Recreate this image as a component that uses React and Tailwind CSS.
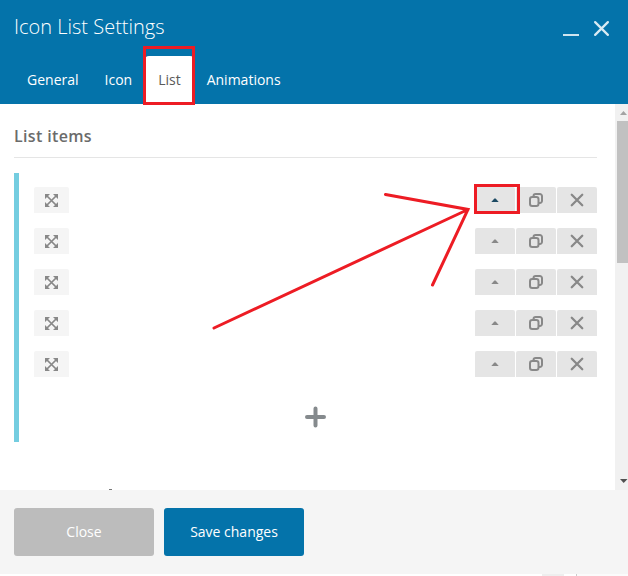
const tabs = ['General', 'Icon', 'List', 'Animations'];
const rows = [0, 1, 2, 3, 4];

function MoveIcon() {
  return (
    <svg width="13" height="13" viewBox="0 0 13 13" fill="#888888">
      <path d="M0 0h5L0 5zM8 0h5v5zM0 8v5h5zM13 8v5H8z" />
      <path d="M1.5 1.5l10 10M11.5 1.5l-10 10" stroke="#888888" strokeWidth="1.7" />
    </svg>
  );
}

function CloneIcon() {
  return (
    <svg width="16" height="16" viewBox="0 0 16 16" fill="none" stroke="#888888" strokeWidth="2">
      <rect x="2" y="5" width="8.5" height="9" rx="2.2" />
      <path d="M5.5 4.5V4.2a2.2 2.2 0 0 1 2.200-2.200h4.100a2.200 2.200 0 0 1 2.200 2.200v4.600a2.200 2.200 0 0 1-2.200 2.200h-1" />
    </svg>
  );
}

function CloseIcon({ size, color, width }) {
  return (
    <svg width={size} height={size} viewBox="0 0 16 16" fill="none" stroke={color} strokeWidth={width} strokeLinecap="round">
      <path d="M2 2l12 12M14 2l-12 12" />
    </svg>
  );
}

function ListRow({ active }) {
  return (
    <div className="flex h-[26px] justify-between">
      <button className="flex w-[35px] items-center justify-center rounded-t-xs bg-[#f5f5f5]">
        <MoveIcon />
      </button>
      <div className="flex gap-px">
        <button className="relative flex w-10 items-center justify-center rounded-t-xs bg-[#e5e5e5]">
          <svg width="8" height="4" viewBox="0 0 8 4" fill={active ? '#1c4a63' : '#888888'}>
            <path d="M0.3 4L3.4 0.5h1.2L7.7 4z" />
          </svg>
          {active && <span className="absolute -left-px -top-[3px] h-[30px] w-[46px] border-3 border-[#ed1c24]" />}
        </button>
        <button className="flex w-10 items-center justify-center rounded-t-xs bg-[#e5e5e5]">
          <CloneIcon />
        </button>
        <button className="flex w-10 items-center justify-center rounded-t-xs bg-[#e5e5e5]">
          <CloseIcon size={14} color="#888888" width={2.6} />
        </button>
      </div>
    </div>
  );
}

export default function App() {
  return (
    <div className="relative flex h-[576px] w-[628px] flex-col overflow-hidden bg-white font-['Open_Sans',sans-serif] text-sm">
      <header className="flex h-[104px] shrink-0 flex-col justify-between bg-[#0473aa] text-white">
        <div className="flex justify-between pl-3.5 pr-[18px] pt-[13px]">
          <h1 className="text-xl leading-7 font-light">Icon List Settings</h1>
          <div className="flex gap-3.5 pt-[7px]">
            <button className="mt-[14px] h-0.5 w-4 bg-[#cfe4ef]" aria-label="Minimize" />
            <button className="h-4 w-[17px]" aria-label="Close panel">
              <CloseIcon size={17} color="#d9eaf3" width={2.1} />
            </button>
          </div>
        </div>
        <nav className="flex h-12 pl-3.5">
          {tabs.map((tab) => (
            <button
              key={tab}
              className={tab === 'List' ? 'relative rounded-t bg-white px-[13px] text-[#5a5a5a]' : 'px-[13px]'}
            >
              {tab}
              {tab === 'List' && (
                <span className="absolute -left-0.5 -top-2.5 -right-px -bottom-px border-3 border-[#ed1c24]" />
              )}
            </button>
          ))}
        </nav>
      </header>

      <main className="flex h-[386px] shrink-0">
        <div className="flex-1 pl-3.5 pr-[18px]">
          <h2 className="h-[54px] border-b border-[#e5e5e5] pt-5 text-base font-semibold tracking-[0.35px] text-[#6b6b6b]">
            List items
          </h2>
          <section className="mt-[15px] h-[269px] border-l-5 border-[#74cde0] pl-[15px] pt-3.5">
            <div className="flex flex-col gap-[15px]">
              {rows.map((row) => (
                <ListRow key={row} active={row === 0} />
              ))}
            </div>
            <button className="mx-auto mt-[29px] block" aria-label="Add item">
              <svg width="22" height="22" viewBox="0 0 22 22" stroke="#858a8d" strokeWidth="4" strokeLinecap="round">
                <path d="M10.5 2.5v17M2 11h17" />
              </svg>
            </button>
          </section>
          {/* top edge of the next heading, cut off by the footer */}
          <div className="mt-[47px] ml-[95px] h-px w-[3px] bg-[#777777]" />
        </div>
        <div className="flex w-[13px] flex-col items-end bg-[#f1f1f1]">
          <svg width="11" height="17" viewBox="0 0 11 17" fill="#a3a3a3">
            <path d="M3 11L6.5 7 10 11z" />
          </svg>
          <div className="h-[142px] w-[11px] bg-[#c1c1c1]" />
          <svg className="mt-auto" width="11" height="17" viewBox="0 0 11 17" fill="#505050">
            <path d="M3 6h7.5L6.7 10z" />
          </svg>
        </div>
      </main>

      <footer className="flex h-[84px] shrink-0 gap-2.5 bg-[#f5f5f5] px-3.5 pt-[18px] text-white">
        <button className="h-12 w-[140px] rounded-[3px] bg-[#bcbcbc]">Close</button>
        <button className="h-12 w-[140px] rounded-[3px] bg-[#0473aa]">Save changes</button>
      </footer>
      <div className="flex h-0.5 pl-[542px]">
        <div className="w-[22px] bg-[#eeeeee]" />
        <div className="ml-3 flex-1 border-l border-[#cccccc] bg-[#fbfbfb]" />
      </div>

      {/* hand-drawn arrow over the list */}
      <svg
        className="pointer-events-none absolute left-0 top-0"
        width="628"
        height="576"
        fill="none"
        stroke="#ed1c24"
        strokeWidth="3"
        strokeLinecap="round"
      >
        <path d="M214 328L468 209.5M385.5 194.5L468 209.5L432.5 285" />
      </svg>
    </div>
  );
}
